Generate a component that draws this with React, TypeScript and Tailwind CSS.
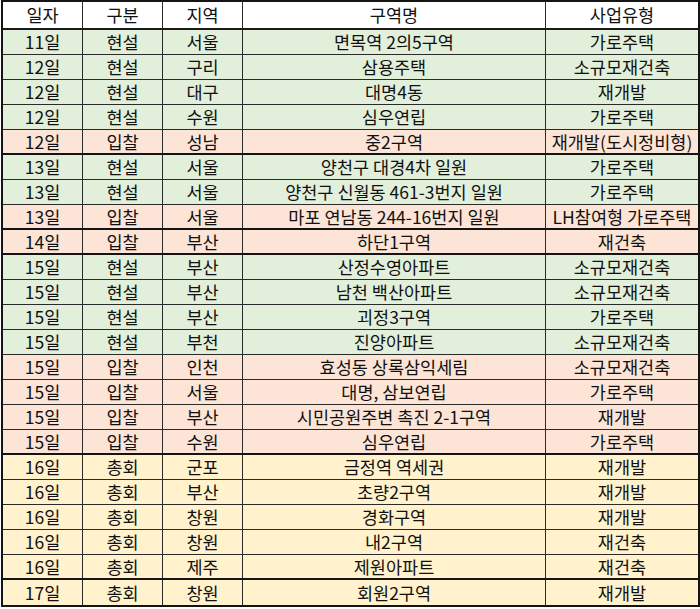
type Row = {
  day: string;
  kind: '현설' | '입찰' | '총회';
  area: string;
  name: string;
  type: string;
  thick?: boolean;
};

const rows: Row[] = [
  { day: '11일', kind: '현설', area: '서울', name: '면목역 2의5구역', type: '가로주택' },
  { day: '12일', kind: '현설', area: '구리', name: '삼용주택', type: '소규모재건축' },
  { day: '12일', kind: '현설', area: '대구', name: '대명4동', type: '재개발' },
  { day: '12일', kind: '현설', area: '수원', name: '심우연립', type: '가로주택' },
  { day: '12일', kind: '입찰', area: '성남', name: '중2구역', type: '재개발(도시정비형)', thick: true },
  { day: '13일', kind: '현설', area: '서울', name: '양천구 대경4차 일원', type: '가로주택' },
  { day: '13일', kind: '현설', area: '서울', name: '양천구 신월동 461-3번지 일원', type: '가로주택' },
  { day: '13일', kind: '입찰', area: '서울', name: '마포 연남동 244-16번지 일원', type: 'LH참여형 가로주택', thick: true },
  { day: '14일', kind: '입찰', area: '부산', name: '하단1구역', type: '재건축', thick: true },
  { day: '15일', kind: '현설', area: '부산', name: '산정수영아파트', type: '소규모재건축' },
  { day: '15일', kind: '현설', area: '부산', name: '남천 백산아파트', type: '소규모재건축' },
  { day: '15일', kind: '현설', area: '부산', name: '괴정3구역', type: '가로주택' },
  { day: '15일', kind: '현설', area: '부천', name: '진양아파트', type: '소규모재건축' },
  { day: '15일', kind: '입찰', area: '인천', name: '효성동 상록삼익세림', type: '소규모재건축' },
  { day: '15일', kind: '입찰', area: '서울', name: '대명, 삼보연립', type: '가로주택' },
  { day: '15일', kind: '입찰', area: '부산', name: '시민공원주변 촉진 2-1구역', type: '재개발' },
  { day: '15일', kind: '입찰', area: '수원', name: '심우연립', type: '가로주택', thick: true },
  { day: '16일', kind: '총회', area: '군포', name: '금정역 역세권', type: '재개발' },
  { day: '16일', kind: '총회', area: '부산', name: '초량2구역', type: '재개발' },
  { day: '16일', kind: '총회', area: '창원', name: '경화구역', type: '재개발' },
  { day: '16일', kind: '총회', area: '창원', name: '내2구역', type: '재건축' },
  { day: '16일', kind: '총회', area: '제주', name: '제원아파트', type: '재건축', thick: true },
  { day: '17일', kind: '총회', area: '창원', name: '회원2구역', type: '재개발' },
];

const bgByKind: Record<Row['kind'], string> = {
  현설: 'bg-[#e2efda]',
  입찰: 'bg-[#fce4d6]',
  총회: 'bg-[#fff2cc]',
};

const cols = 'grid grid-cols-[80px_80px_80px_303px_152px]';

function Cell({ children, last }: { children: React.ReactNode; last?: boolean }) {
  return (
    <div
      className={`flex items-center justify-center whitespace-nowrap ${
        last ? '' : 'border-r border-[#2a2a2a]'
      }`}
    >
      {children}
    </div>
  );
}

export default function App() {
  return (
    <div className="h-[609px] w-[700px] bg-white pt-0 pl-px font-['Noto_Sans_CJK_KR','Noto_Sans',sans-serif] text-[17.5px] leading-none text-[#111]">
      <div className="w-[699px] border-2 border-[#141414]">
        {/* header */}
        <div className={`${cols} h-[28px] border-b-2 border-[#1a1a1a] bg-white`}>
          <Cell>일자</Cell>
          <Cell>구분</Cell>
          <Cell>지역</Cell>
          <Cell>구역명</Cell>
          <Cell last>사업유형</Cell>
        </div>

        {rows.map((r, i) => (
          <div
            key={i}
            className={`${cols} h-[25px] ${bgByKind[r.kind]} ${
              i === rows.length - 1
                ? ''
                : r.thick
                  ? 'border-b-2 border-[#141414]'
                  : 'border-b border-[#2a2a2a]'
            }`}
          >
            <Cell>{r.day}</Cell>
            <Cell>{r.kind}</Cell>
            <Cell>{r.area}</Cell>
            <Cell>{r.name}</Cell>
            <Cell last>{r.type}</Cell>
          </div>
        ))}
      </div>
    </div>
  );
}
